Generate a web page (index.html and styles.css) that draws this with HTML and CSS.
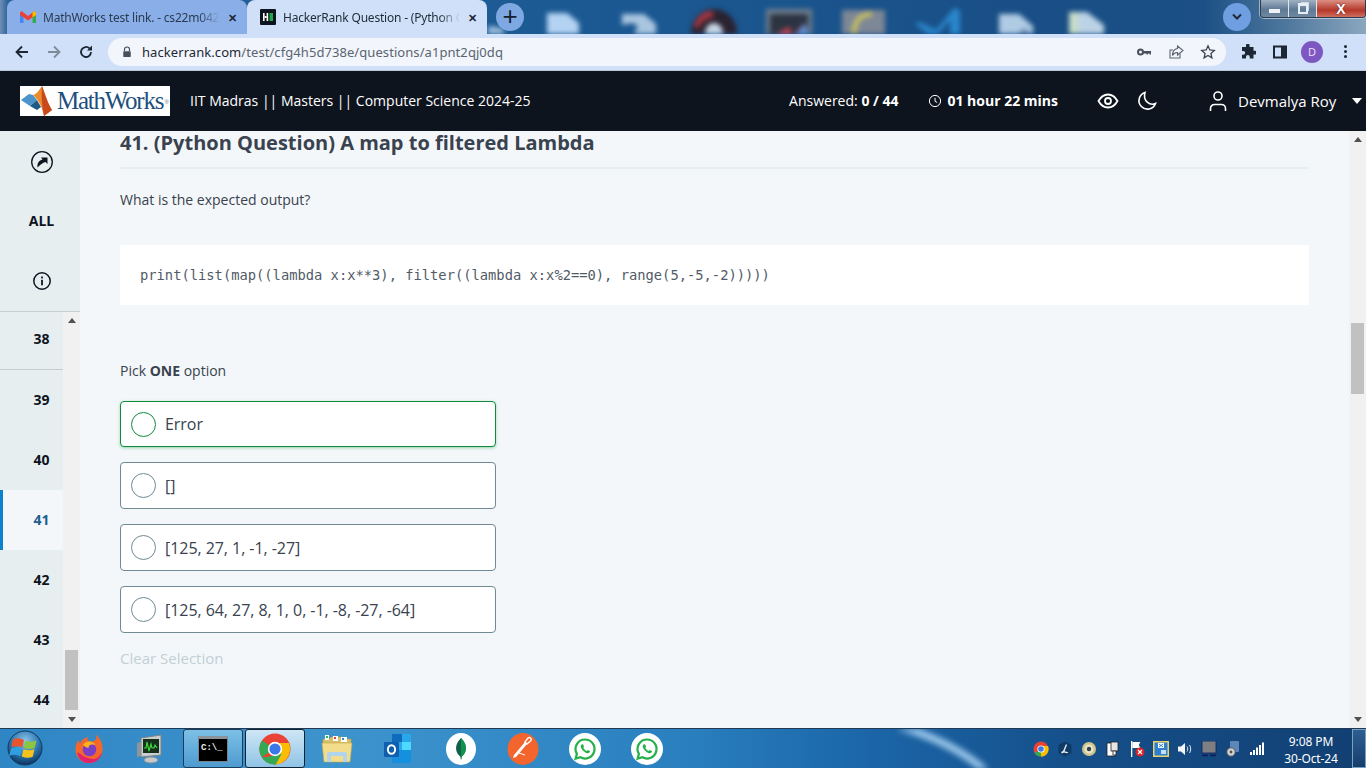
FILE: index.html
```html
<!DOCTYPE html>
<html lang="en">
<head>
    <meta charset="utf-8">
    <title>HackerRank Question</title>
    <link rel="stylesheet" href="styles.css">
</head>
<body>
<svg class="defs" width="0" height="0">
    <symbol id="whatsapp" viewBox="0 0 32 32">
        <circle cx="16" cy="16" r="16" fill="#fff"/>
        <path d="M16 6.500a9.500 9.500 0 0 0-8.100 14.400L6.600 25.600l4.800-1.300A9.500 9.500 0 1 0 16 6.500z" fill="none" stroke="#25b04a" stroke-width="2.200"/>
        <path d="M12.600 11.400c-.5.4-1 1.300-.8 2.500.4 2.200 3.800 5.700 6.300 6.300 1.300.3 2.300-.3 2.700-1.100.2-.5.200-1 .1-1.100l-2.100-1.100-1 1.100c-1.500-.5-2.800-1.700-3.500-3.200l.8-1-1-2.300c-.3-.3-1.100-.3-1.500-.1z" fill="#25b04a"/>
    </symbol>
</svg>
<div class="screen">
    <!-- chrome tab strip, desktop shows through behind it -->
    <div class="tabstrip">
        <svg class="desk-icons" viewBox="0 0 1366 34" width="1366" height="34">
            <path d="M488 34v-8l14 2 3 6z" fill="#9fc0de"/>
            <path d="M547 34V13h20l12 10v11z" fill="#b4d3f2"/>
            <path d="M622 14h22l12 10v10h-22l4-8-6-3-10 2z" fill="#a9c6e0"/>
            <path d="M691 34c0-14 10-25 23-25s23 11 23 25z" fill="#2a2230"/>
            <path d="M694 26c3-10 10-15 18-15l2 6c-8 1-13 5-16 12z" fill="#a83640"/>
            <path d="M705 34c0-7 4-11 9-11s9 4 9 11z" fill="#c9d8e6"/>
            <rect x="766" y="9" width="46" height="25" fill="#707f8f"/>
            <rect x="770" y="14" width="38" height="20" fill="#2c3442"/>
            <path d="M775 34l14-7 4 7zM794 34l10-10 2 10z" fill="#c8404a"/>
            <path d="M796 34l9-11 3 11z" fill="#5e94d8"/>
            <rect x="842" y="10" width="43" height="24" fill="#7d8796"/>
            <path d="M854 34c0-12 6-20 18-20" fill="none" stroke="#c9c060" stroke-width="5"/>
            <path d="M915 24l5-2 16 8 18-22 6 2v24h-10v-14l-12 14h-10l-9-7z" fill="#2a86cc"/>
            <path d="M999 14h20l14 12v8h-34z" fill="#b0cbe4"/>
            <path d="M1018 34l6-6 8 6z" fill="#6b8fb2"/>
            <path d="M1069 12h18l17 13v9h-35z" fill="#bcd3e6"/>
            <rect x="1069" y="12" width="9" height="22" fill="#c8dcc8"/>
        </svg>
        <div class="tab">
            <svg class="favicon" viewBox="0 0 16 16"><path d="M0 4v10h3.500V7z" fill="#4285f4"/><path d="M12.500 7v7H16V4z" fill="#34a853"/><path d="M0 3.500 1.500 2 8 7 14.500 2 16 3.500V6L8 11.500 0 6z" fill="#ea4335"/><path d="M12.500 3.200 14.500 2 16 3.500V6l-3.500 2.600z" fill="#fbbc04"/></svg>
            <span class="tab-title">MathWorks test link. - cs22m042</span>
            <span class="tab-close">✕</span>
        </div>
        <div class="tab active">
            <svg class="favicon" viewBox="0 0 16 16"><rect width="16" height="16" rx="1" fill="#0e141e"/><rect x="3" y="4" width="1.600" height="8" fill="#fff"/><rect x="4.600" y="7" width="2" height="2" fill="#fff"/><rect x="6.600" y="4" width="1.600" height="8" fill="#fff"/><rect x="9.500" y="4" width="3.500" height="8" fill="#1ba94c"/></svg>
            <span class="tab-title">HackerRank Question - (Python C</span>
            <span class="tab-close">✕</span>
        </div>
        <div class="new-tab">+</div>
        <div class="strip-right">
            <div class="tab-search"><svg width="12" height="8" viewBox="0 0 12 8"><path d="M2 1.500 6 5.500 10 1.500" fill="none" stroke="#1c2a3a" stroke-width="2"/></svg></div>
            <div class="winctl">
                <span class="wbtn"><i class="w-min"></i></span>
                <span class="wbtn"><i class="w-max"></i></span>
                <span class="wbtn close">X</span>
            </div>
        </div>
    </div>

    <div class="toolbar">
        <svg class="tool" viewBox="0 0 16 16"><path d="M14 8H3M8 2.500 2.500 8 8 13.500" fill="none" stroke="#1d2733" stroke-width="1.800"/></svg>
        <svg class="tool" viewBox="0 0 16 16"><path d="M2 8h11M8 2.500 13.500 8 8 13.500" fill="none" stroke="#7f8b99" stroke-width="1.800"/></svg>
        <svg class="tool" viewBox="0 0 16 16"><path d="M13 8a5 5 0 1 1-1.500-3.600" fill="none" stroke="#1d2733" stroke-width="1.800"/><path d="M14 1.500v5h-5z" fill="#1d2733"/></svg>
        <div class="omnibox">
            <svg class="lock" viewBox="0 0 12 14"><path d="M3 6V4a3 3 0 0 1 6 0v2" fill="none" stroke="#474f5a" stroke-width="1.400"/><rect x="1.500" y="6" width="9" height="7" rx="1" fill="#474f5a"/></svg>
            <span class="url"><b>hackerrank.com</b>/test/cfg4h5d738e/questions/a1pnt2qj0dq</span>
            <svg class="omni-icon" viewBox="0 0 16 16"><circle cx="4.500" cy="8" r="2.500" fill="none" stroke="#474f5a" stroke-width="2"/><path d="M7 7h8v3.500h-1.500V9.500H12v1h-1.500v-1H7z" fill="#474f5a"/></svg>
            <svg class="omni-icon" viewBox="0 0 16 16"><path d="M12 9.500V14H2V6h3" fill="none" stroke="#5b6570" stroke-width="1.100"/><path d="M9.500 2 15 6.500 9.500 11V8.500C7 8.500 5.500 9.500 4.500 11.500 4.500 8 6.500 5 9.500 4.500z" fill="none" stroke="#5b6570" stroke-width="1.100"/></svg>
            <svg class="omni-icon" viewBox="0 0 16 16"><path d="M8 1.800 9.800 6l4.500.4-3.400 3 1 4.400L8 11.500 4.100 13.800l1-4.400-3.400-3L6.200 6z" fill="none" stroke="#3a4450" stroke-width="1.300"/></svg>
        </div>
        <svg class="tool ext" viewBox="0 0 16 16"><path d="M6 1.500a1.800 1.800 0 0 1 3.600 0V3H13.500v3.800H15a1.900 1.900 0 0 1 0 3.800h-1.500V14.500H9.800V13a1.900 1.900 0 0 0-3.800 0v1.500H2V10.700h1.300a1.900 1.900 0 0 0 0-3.800H2V3h4z" fill="#1d2733"/></svg>
        <svg class="tool" viewBox="0 0 16 16"><path d="M2 2.500h12v11H2z" fill="none" stroke="#1d2733" stroke-width="2"/><rect x="9" y="2.500" width="5" height="11" fill="#1d2733"/></svg>
        <span class="avatar">D</span>
        <span class="kebab"><i></i><i></i><i></i></span>
    </div>

    <header class="appbar">
        <div class="logo">
            <svg class="membrane" viewBox="0 0 36 30"><path d="M1 14 9 8l4 1 4 5-7 6z" fill="#4b93c8"/><path d="M10 20l7-6 4 7-4 3z" fill="#1e5a85"/><path d="M22 0c3 8 6 18 10 24l-8 6c-2-9-5-16-11-21 4-1 6-5 9-9z" fill="#ec8a2e"/><path d="M22 0c-1 10 0 20 2 30l8-6C28 18 25 8 22 0z" fill="#c9481c"/></svg>
            <span class="logo-text">MathWorks</span><span class="logo-reg">®</span>
        </div>
        <span class="test-name">IIT Madras || Masters || Computer Science 2024-25</span>
        <div class="status">
            <span class="answered">Answered: <b>0 / 44</b></span>
            <span class="timer">
                <svg class="clock" viewBox="0 0 14 14"><circle cx="7" cy="7" r="5.600" fill="none" stroke="#fff" stroke-width="1"/><path d="M7 3.800V7.300L9.200 8.500" fill="none" stroke="#fff" stroke-width="1"/></svg>
                <b>01 hour 22 mins</b>
            </span>
            <svg class="bar-icon eye" viewBox="0 0 22 22"><path d="M1.500 11C4 6.500 7.200 4.500 11 4.500S18 6.500 20.500 11C18 15.500 14.800 17.500 11 17.500S4 15.500 1.500 11z" fill="none" stroke="#fff" stroke-width="1.800"/><circle cx="11" cy="11" r="3" fill="none" stroke="#fff" stroke-width="1.800"/></svg>
            <svg class="bar-icon moon" viewBox="0 0 22 22"><path d="M9 2.500A8.500 8.500 0 1 0 19.500 13.500C14 16 6.500 11 9 2.500z" fill="none" stroke="#fff" stroke-width="1.600"/></svg>
            <span class="user">
                <svg class="user-icon" viewBox="0 0 20 22"><circle cx="10" cy="6" r="4" fill="none" stroke="#fff" stroke-width="1.600"/><path d="M2.500 21v-2.500A4 4 0 0 1 6.500 14.500h7a4 4 0 0 1 4 4V21" fill="none" stroke="#fff" stroke-width="1.600"/></svg>
                <span class="user-name">Devmalya Roy</span>
                <i class="caret"></i>
            </span>
        </div>
    </header>

    <div class="workspace">
        <aside class="sidebar">
            <div class="side-top">
                <div class="side-cell first">
                    <svg width="24" height="24" viewBox="0 0 24 24"><circle cx="12" cy="12" r="10.300" fill="none" stroke="#0e141e" stroke-width="1.300"/><path d="M7.500 17.500C7 13 9 10.500 12.500 9.500L11 7.500h6.500V14l-2-2c-3 1-5 2.500-8 5.500z" fill="#0e141e"/></svg>
                </div>
                <div class="side-cell all">ALL</div>
                <div class="side-cell">
                    <svg width="20" height="20" viewBox="0 0 20 20"><circle cx="10" cy="10" r="8.200" fill="none" stroke="#0e141e" stroke-width="1.500"/><rect x="9.100" y="8.800" width="1.800" height="5.500" fill="#0e141e"/><rect x="9.100" y="5.500" width="1.800" height="1.900" fill="#0e141e"/></svg>
                </div>
            </div>
            <div class="side-list">
                <ol class="q-list">
                    <li class="q-first">38</li>
                    <li>39</li>
                    <li>40</li>
                    <li class="current">41</li>
                    <li>42</li>
                    <li>43</li>
                    <li>44</li>
                </ol>
                <div class="scrollbar side-scroll">
                    <i class="arrow up"></i>
                    <div class="track"><div class="thumb"></div></div>
                    <i class="arrow down"></i>
                </div>
            </div>
        </aside>

        <main class="content">
            <h1 class="q-title">41. (Python Question) A map to filtered Lambda</h1>
            <p class="q-text">What is the expected output?</p>
            <pre class="code">print(list(map((lambda x:x**3), filter((lambda x:x%2==0), range(5,-5,-2)))))</pre>
            <p class="pick">Pick <b>ONE</b> option</p>
            <div class="options">
                <label class="option selected"><i class="radio"></i><span>Error</span></label>
                <label class="option"><i class="radio"></i><span>[]</span></label>
                <label class="option"><i class="radio"></i><span>[125, 27, 1, -1, -27]</span></label>
                <label class="option"><i class="radio"></i><span>[125, 64, 27, 8, 1, 0, -1, -8, -27, -64]</span></label>
            </div>
            <div class="clear">Clear Selection</div>
        </main>

        <div class="scrollbar page-scroll">
            <i class="arrow up"></i>
            <div class="track"><div class="thumb"></div></div>
            <i class="arrow down"></i>
        </div>
    </div>

    <!-- windows 7 taskbar -->
    <footer class="taskbar">
        <svg class="glow" viewBox="0 0 1366 40" width="1366" height="40"><path d="M895 -4C930 6 965 22 990 46" fill="none" stroke="#a8d2f2" stroke-width="7"/></svg>
        <div class="start">
            <svg viewBox="0 0 36 36" width="36" height="36">
                <defs><radialGradient id="orb" cx="50%" cy="30%" r="70%"><stop offset="0" stop-color="#8fc8ee"/><stop offset=".6" stop-color="#2a74ae"/><stop offset="1" stop-color="#0c3560"/></radialGradient></defs>
                <circle cx="18" cy="18" r="17" fill="url(#orb)" stroke="#12385c"/>
                <path d="M6 9.500c3.500-1.800 7-1.300 11 .5l-1.800 7.500c-3.500-1.500-7-2-11-.2z" fill="#e8552d"/>
                <path d="M18.500 10.500c3.500 1.500 7 1.600 11 0l-1.800 7.500c-3.500 1.500-7 1.300-11-.3z" fill="#8cc63f"/>
                <path d="M4 18.500c3.500-1.800 7-1.300 11 .2l-1.800 7.500c-3.500-1.500-7-2-11-.2z" fill="#2f9fe0"/>
                <path d="M16.500 19.200c3.500 1.500 7 1.600 11 0l-1.800 7.500c-3.500 1.500-7 1.300-11-.3z" fill="#f6c21c"/>
            </svg>
        </div>
        <div class="apps">
            <div class="app">
                <svg viewBox="0 0 30 30" width="30" height="30"><path d="M15 29C7 29 1.500 23 1.500 15.500 1.500 11 3 8 4.500 6l1.500 4C7 6.500 10 4 14 3c-1 2-.5 3.500 1.500 4.500C22 8 24 4 21 .5 26 3 29 9 28.500 16 28 23.500 22.500 29 15 29z" fill="#f5662b"/><path d="M15 29C8 29 3.500 24 3.500 18 8 21 12 25 20 25c3 0 6-3 8-7-1 6.500-6 11-13 11z" fill="#e0226f"/><circle cx="15.500" cy="15.500" r="6.800" fill="#7b3fc6"/><path d="M9 11c2-3.500 7-5 11-2 1 .8 1.500 2 1 2-3-1-7 0-6 2.500-2 .5-4-.5-6-2.500z" fill="#ffb01f"/></svg>
            </div>
            <div class="app">
                <svg viewBox="0 0 30 30" width="30" height="30"><path d="M5 4 25 1v20L5 23z" fill="#c9ced0" stroke="#7d8487"/><rect x="7" y="5" width="16" height="14" fill="#17301c"/><path d="M8 14h2l1-6 2 9 2-7 1 4h2l1-3 2 3" fill="none" stroke="#3fd83c" stroke-width="1.200"/><path d="M1 9l4-1v14l-4 1z" fill="#8d9598"/><ellipse cx="15" cy="26" rx="7" ry="3" fill="#c5c9cb" stroke="#8b9194"/></svg>
            </div>
            <div class="app pressed">
                <span class="cmd"><span class="cmd-text">C:\_</span></span>
            </div>
            <div class="app pressed light">
                <svg viewBox="0 0 32 32" width="32" height="32"><circle cx="16" cy="16" r="15.500" fill="#ea4335"/><path d="M16 16 2.700 24A15.500 15.500 0 0 1 3 7.500z" fill="#34a853"/><path d="M16 10h13.800a15.500 15.500 0 0 1-13 21.500z" fill="#fbbc04"/><path d="M8 24 2.700 24A15.500 15.500 0 0 0 16.800 31.500l6-11z" fill="#34a853"/><circle cx="16" cy="16" r="7.200" fill="#fff"/><circle cx="16" cy="16" r="5.600" fill="#3b78e7"/></svg>
            </div>
            <div class="app">
                <svg viewBox="0 0 32 32" width="32" height="32"><path d="M2 6h6l2-2h10l1 2h9v6H2z" fill="#d9c16a" stroke="#b19a42" stroke-width=".6"/><rect x="4" y="2" width="4" height="5" fill="#fff"/><rect x="5" y="3" width="2" height="2" fill="#2fb34a"/><rect x="12" y="3" width="5" height="5" fill="#fff"/><rect x="13" y="4" width="2" height="2" fill="#d8403a"/><rect x="20" y="4" width="6" height="5" fill="#fff"/><rect x="21" y="5" width="2" height="2" fill="#3a82d8"/><path d="M1 10h30l-2 19H3z" fill="#f3dd8c" stroke="#c2a44d" stroke-width=".6"/><path d="M6 29v-8a2 2 0 0 1 2-2h16a2 2 0 0 1 2 2v8h-4v-6H10v6z" fill="#aed4ee"/></svg>
            </div>
            <div class="app">
                <svg viewBox="0 0 32 32" width="32" height="32"><path d="M9 1h18a1 1 0 0 1 1 1v22H9z" fill="#0f6cbd"/><rect x="19" y="1" width="9" height="8" fill="#28a8ea"/><rect x="9" y="9" width="10" height="8" fill="#28a8ea"/><rect x="19" y="9" width="9" height="8" fill="#50d9ff"/><path d="M9 17h19v12a1 1 0 0 1-1 1H9z" fill="#1490df"/><rect x="1" y="9" width="15" height="15" rx="1" fill="#0f5fb0"/><ellipse cx="8.500" cy="16.500" rx="3.600" ry="4.300" fill="none" stroke="#fff" stroke-width="2"/></svg>
            </div>
            <div class="app">
                <svg viewBox="0 0 32 32" width="32" height="32"><ellipse cx="16" cy="16" rx="15" ry="16" fill="#fff"/><path d="M16 5c4 4 5.500 8 4.800 12-.5 3.500-3 5.500-4 6.500L16 27l-.8-3.500c-1-1-3.500-3-4-6.500C10.500 13 12 9 16 5z" fill="#116149"/><path d="M16 5c4 4 5.500 8 4.800 12-.5 3.500-3 5.500-4 6.500L16 27z" fill="#12924f"/></svg>
            </div>
            <div class="app">
                <svg viewBox="0 0 32 32" width="32" height="32"><ellipse cx="16" cy="16" rx="15.500" ry="16" fill="#f4652e"/><path d="M6 25l3-1 11-13-2-2L7 22z" fill="#fff"/><path d="M18 9l2 2 4-3.500A2 2 0 0 0 21 5z" fill="none" stroke="#fff" stroke-width="1.400"/><path d="M12 20l6 2" stroke="#fff" stroke-width="1"/></svg>
            </div>
            <div class="app"><svg width="32" height="32"><use href="#whatsapp"/></svg></div>
            <div class="app"><svg width="32" height="32"><use href="#whatsapp"/></svg></div>
        </div>
        <div class="tray">
            <svg class="tray-icon" viewBox="0 0 16 16"><circle cx="8" cy="8" r="7.500" fill="#ea4335"/><path d="M8 8 1.500 12A7.500 7.500 0 0 0 8 15.500l3.500-6z" fill="#34a853"/><path d="M8 5h7a7.500 7.500 0 0 1-7 10.500z" fill="#fbbc04"/><circle cx="8" cy="8" r="3.600" fill="#fff"/><circle cx="8" cy="8" r="2.800" fill="#3b78e7"/></svg>
            <svg class="tray-icon" viewBox="0 0 16 16"><path d="M8 .5 14.500 4v8L8 15.500 1.500 12V4z" fill="#0d3a66"/><path d="M9 3 6 10l-2 1 1 1.500 2-1 3 .8 1.500-1-4-1L10 4z" fill="#e9eef2"/></svg>
            <svg class="tray-icon" viewBox="0 0 16 16"><circle cx="8" cy="8" r="7" fill="#cfc48a"/><circle cx="8" cy="8" r="4.500" fill="#e8e4c8"/><circle cx="8" cy="8" r="2.200" fill="#33424f"/></svg>
            <svg class="tray-icon" viewBox="0 0 16 16"><rect x="2" y="2" width="8" height="13" fill="#fff" stroke="#222" stroke-width=".8"/><rect x="6" y="1" width="7" height="9" fill="#e6e6e6" stroke="#222" stroke-width=".8"/><rect x="8" y="10" width="3" height="4" fill="#fff" stroke="#222" stroke-width=".8"/></svg>
            <svg class="tray-icon" viewBox="0 0 16 16"><rect x="2" y="0" width="1.300" height="16" fill="#fff"/><path d="M3.300 1h8l-1.500 3 1.500 3h-8z" fill="#fff"/><circle cx="11" cy="11" r="4.500" fill="#d8232a"/><path d="M9 9l4 4M13 9l-4 4" stroke="#fff" stroke-width="1.200"/></svg>
            <svg class="tray-icon" viewBox="0 0 16 16"><rect width="16" height="16" fill="#e9d36a"/><rect x="1.500" y="1.500" width="13" height="13" fill="#2f7fd0"/><rect x="5" y="2" width="6" height="5" fill="#fff"/><path d="M6 3l4 3M10 3 6 6" stroke="#2f7fd0"/><path d="M8 9h5v4H8z" fill="#bfe0f5"/></svg>
            <svg class="tray-icon" viewBox="0 0 16 16"><path d="M1 5.500h3L8 2v12L4 10.500H1z" fill="#f4f6f8"/><path d="M10 5.500c1 1.500 1 3.500 0 5M12.500 4c1.600 2.500 1.600 5.500 0 8" fill="none" stroke="#dfe5ea" stroke-width="1"/></svg>
            <svg class="tray-icon" viewBox="0 0 16 16"><rect x="1" y="0" width="14" height="12" fill="#7d7f82" stroke="#10205e" stroke-width=".8"/><rect x="1" y="13.500" width="6" height="1.800" fill="#10205e"/><rect x="9" y="13.500" width="6" height="1.800" fill="#10205e"/></svg>
            <svg class="tray-icon" viewBox="0 0 16 16"><rect x="5" y="0" width="9" height="11" rx="1" fill="#5d87b8"/><circle cx="6" cy="11" r="4.200" fill="#d2d4d2" stroke="#555"/><circle cx="6" cy="11" r="1.400" fill="#555"/></svg>
            <svg class="tray-icon" viewBox="0 0 16 16"><rect x="1" y="11" width="2" height="3" fill="#fff"/><rect x="4" y="9" width="2" height="5" fill="#fff"/><rect x="7" y="6.500" width="2" height="7.500" fill="#fff"/><rect x="10" y="4" width="2" height="10" fill="#fff"/><rect x="13" y="1.500" width="2" height="12.500" fill="#fff"/></svg>
        </div>
        <div class="clock-text"><span>9:08 PM</span><span>30-Oct-24</span></div>
        <div class="show-desktop"></div>
    </footer>
</div>
</body>
</html>
```

FILE: styles.css
```css
*{margin: 0;padding: 0;box-sizing: border-box;list-style: none;}
html,body{width: 1366px;height: 768px;overflow: hidden;}
body{font-family: "Open Sans", "Noto Sans", sans-serif;color: #39424e;}
i{display: block;font-style: normal;}
.defs{position: absolute;}
.screen{width: 1366px;height: 768px;display: flex;flex-direction: column;}

/* tab strip */
.tabstrip{height: 34px;flex: none;display: flex;align-items: flex-end;padding-left: 7px;position: relative;overflow: hidden;
    background: linear-gradient(90deg, #6f8fb5 0, #2a6299 8px, #1c5a94 40%, #194f86 75%, #1b4f85 88%, #4c769c 94%, #8ba7bf 100%);}
.desk-icons{position: absolute;left: 0;top: 0;filter: blur(2.500px);}
.tab{position: relative;width: 240px;height: 34px;display: flex;align-items: center;padding: 0 7px 0 13px;background: #8aafe8;border-radius: 8px 8px 0 0;color: #2b3a4f;font-size: 12px;}
.tab.active{background: #cfe0f8;color: #1f2a36;}
.favicon{width: 16px;height: 16px;flex: none;margin-right: 7px;}
.tab-title{flex: 1;min-width: 0;white-space: nowrap;overflow: hidden;font-family: "Noto Sans", sans-serif;letter-spacing: -.2px;
    -webkit-mask-image: linear-gradient(90deg,#000 88%,transparent);mask-image: linear-gradient(90deg,#000 88%,transparent);}
.tab-close{flex: none;width: 16px;margin-left: 4px;text-align: center;font-size: 11px;font-weight: 700;color: #1d2733;}
.new-tab{position: relative;width: 28px;height: 28px;margin: 0 0 3px 9px;border-radius: 50%;background: #7ea8e2;color: #14202e;font: 400 26px/26px "Liberation Sans", sans-serif;text-align: center;}
.strip-right{position: relative;margin-left: auto;height: 34px;display: flex;align-items: flex-start;}
.tab-search{width: 28px;height: 28px;margin: 3px 9px 0 0;border-radius: 50%;background: #6f9fe0;display: flex;align-items: center;justify-content: center;}
.winctl{width: 106px;height: 18px;display: flex;border: 1px solid #2b3c4e;border-top: 0;border-radius: 0 0 4px 4px;overflow: hidden;box-shadow: 0 0 0 1px rgba(220,230,240,.6);}
.wbtn{width: 28px;display: flex;align-items: center;justify-content: center;border-right: 1px solid #dfe6ee;background: linear-gradient(#9fb0c2,#5f7a96 55%,#6d889f);}
.wbtn.close{flex: 1;border-right: 0;background: linear-gradient(#dc8f84,#b5372a 60%,#cf6f60);color: #fff;font: 700 14px/18px "Liberation Sans", sans-serif;text-shadow: 0 0 2px #4a1a14;}
.w-min{width: 11px;height: 4px;background: #eef2f6;margin-top: 4px;}
.w-max{width: 10px;height: 11px;border: 2px solid #e6edf4;border-top-width: 3px;box-shadow: 2px -2px 0 -1px #cfd9e3;}

/* toolbar */
.toolbar{height: 37px;flex: none;display: flex;align-items: center;padding: 0 0 1px 14px;background: #cfe0f8;border-bottom: 1px solid #bcc8d8;}
.tool{width: 16px;height: 16px;flex: none;margin-right: 16px;}
.omnibox{width: 1118px;height: 28px;margin-left: -2px;flex: none;display: flex;align-items: center;padding: 0 10px 0 14px;background: #f2f6fc;border-radius: 14px;font-size: 13px;}
.lock{width: 10px;height: 12px;flex: none;margin-right: 10px;}
.url{flex: 1;color: #5a6470;font-family: "Noto Sans", sans-serif;font-size: 13px;letter-spacing: .07px;}
.url b{font-weight: 400;color: #1d2733;}
.omni-icon{width: 16px;height: 16px;flex: none;margin-left: 16px;}
.ext{margin-left: 14px;margin-right: 16px;}
.avatar{width: 22px;height: 22px;margin-left: -3px;border-radius: 50%;background: #7e57c2;color: #e6def5;font: 400 11px/22px "Noto Sans", sans-serif;text-align: center;}
.kebab{margin-left: 21px;display: flex;flex-direction: column;gap: 2px;}
.kebab i{width: 3px;height: 3px;border-radius: 50%;background: #1d2733;}

/* hackerrank header */
.appbar{height: 60px;flex: none;display: flex;align-items: center;padding-left: 20px;background: #0e141e;color: #fff;font-size: 14px;}
.logo{width: 150px;height: 30px;flex: none;display: flex;align-items: center;background: #fff;overflow: hidden;}
.membrane{width: 36px;height: 30px;flex: none;}
.logo-text{font: 400 25px "Liberation Serif", serif;color: #1d4f7c;margin-left: 1px;letter-spacing: -1.25px;}
.logo-reg{font-size: 6px;color: #7f93a6;margin: 1px 0 0 1px;}
.test-name{margin-left: 20px;padding-bottom: 2px;}
.status{margin-left: auto;display: flex;align-items: center;padding-bottom: 1px;}
.answered b,.timer b{font-weight: 700;}
.timer{margin-left: 30px;display: flex;align-items: center;gap: 5px;}
.clock{width: 14px;height: 14px;}
.bar-icon{width: 22px;height: 22px;}
.eye{margin-left: 39px;}
.moon{margin-left: 17px;}
.user{margin-left: 50px;width: 158px;display: flex;align-items: center;font-size: 15px;}
.user-icon{width: 20px;height: 22px;flex: none;}
.user-name{margin-left: 10px;}
.caret{margin-left: 16px;border: 5px solid transparent;border-top: 6px solid #fff;border-bottom: 0;}

/* main area */
.workspace{flex: 1;min-height: 0;display: flex;background: #f3f7f9;}
.sidebar{width: 80px;flex: none;display: flex;flex-direction: column;background: #e7eef0;}
.side-top{height: 181px;flex: none;border-bottom: 1px solid #c6ced2;}
.side-cell{height: 60px;display: flex;align-items: center;justify-content: center;padding-left: 4px;font-size: 14px;font-weight: 700;color: #0e141e;}
.side-cell.first{padding-top: 2px;}
.side-cell.all{padding-left: 3px;padding-bottom: 2px;}
.side-list{flex: 1;min-height: 0;display: flex;}
.q-list{width: 63px;flex: none;font-size: 14px;font-weight: 700;color: #0e141e;text-align: center;}
.q-list li{height: 60px;line-height: 60px;padding-left: 20px;}
.q-list li.q-first{height: 58px;line-height: 54px;border-bottom: 1px solid #c6ced2;}
.q-list li.current{background: #f3f7f9;border-left: 3px solid #0a82cc;color: #1d5f8f;padding-left: 17px;}
.scrollbar{width: 17px;flex: none;display: flex;flex-direction: column;align-items: center;background: #f1f1f1;}
.track{flex: 1;width: 100%;min-height: 0;padding: 0 2px;position: relative;}
.arrow{width: 0;height: 17px;flex: none;border: 4px solid transparent;}
.arrow.up{border-top-width: 6px;border-bottom: 5px solid #505050;height: 0;margin-bottom: 6px;}
.arrow.down{border-bottom-width: 6px;border-top: 5px solid #505050;height: 0;margin-top: 6px;}
.thumb{background: #c1c1c1;width: 13px;}
.side-scroll .thumb{height: 60px;margin-top: 321px;}
.page-scroll .thumb{height: 71px;margin-top: 175px;}
.page-scroll{margin-left: auto;}

.content{width: 1269px;padding: 0 40px;flex: none;}
.q-title{height: 38px;font-size: 20px;line-height: 24px;font-weight: 700;color: #39424e;border-bottom: 2px solid #e7eef0;}
.q-text{margin-top: 20px;font-size: 14px;line-height: 22px;color: #39424e;}
.code{margin-top: 34px;height: 60px;padding-left: 20px;background: #fff;font: 13.780px/60px "DejaVu Sans Mono", monospace;color: #515b67;}
.pick{margin-top: 56px;font-size: 14px;line-height: 20px;color: #39424e;}
.pick b{font-weight: 700;}
.options{margin-top: 20px;width: 376px;display: flex;flex-direction: column;gap: 15px;}
.option{height: 47px;display: flex;align-items: center;padding-left: 10px;background: #fff;border: 1px solid #6f8a94;border-radius: 4px;font-size: 16px;letter-spacing: -.05px;color: #39424e;}
.option.selected{height: 46px;border-color: #128a3e;box-shadow: 0 1px 3px rgba(27,169,76,.45);}
.radio{width: 25px;height: 25px;flex: none;margin-right: 9px;border: 1px solid #6f8a94;border-radius: 50%;}
.selected .radio{border-color: #128a3e;}
.clear{margin-top: 14px;font-size: 15px;line-height: 22px;color: #c2d0d6;}

/* taskbar */
.taskbar{height: 40px;flex: none;display: flex;align-items: stretch;position: relative;overflow: hidden;border-top: 1px solid #1f3a52;
    background: linear-gradient(90deg,#2f86c4 0,#3d94cd 25%,#2a80bf 50%,#1c68ab 62%,#15508b 78%,#123f72 100%);}
.glow{position: absolute;left: 0;top: 0;filter: blur(3px);}
.start{width: 58px;flex: none;padding: 1px 0 0 7px;position: relative;}
.apps{display: flex;position: relative;}
.app{width: 62px;display: flex;align-items: center;justify-content: center;}
.app.pressed{width: 60px;margin: 0 1px;border: 1px solid #1b3d5c;border-radius: 3px;background: linear-gradient(#7cc0e6,#4e9bd0);}
.app.pressed.light{background: linear-gradient(#cfe6f5,#8fc4e6);border-color: #123;}
.cmd{width: 30px;height: 26px;display: block;background: #000;border: 1px solid #7a828a;border-top: 3px solid #8b939b;color: #eee;font: 700 9px/18px "Liberation Mono", monospace;padding-left: 2px;}
.tray{margin-left: auto;display: flex;align-items: center;gap: 8px;position: relative;}
.tray-icon{width: 16px;height: 16px;flex: none;}
.clock-text{width: 87px;display: flex;flex-direction: column;align-items: center;justify-content: center;padding: 2px 0 0 5px;color: #fff;font: 12px/17px "Noto Sans", sans-serif;letter-spacing: -.1px;position: relative;}
.show-desktop{width: 14px;background: linear-gradient(#2d5f92,#173e6b);border: 1px solid #7ba0c2;position: relative;}
```
